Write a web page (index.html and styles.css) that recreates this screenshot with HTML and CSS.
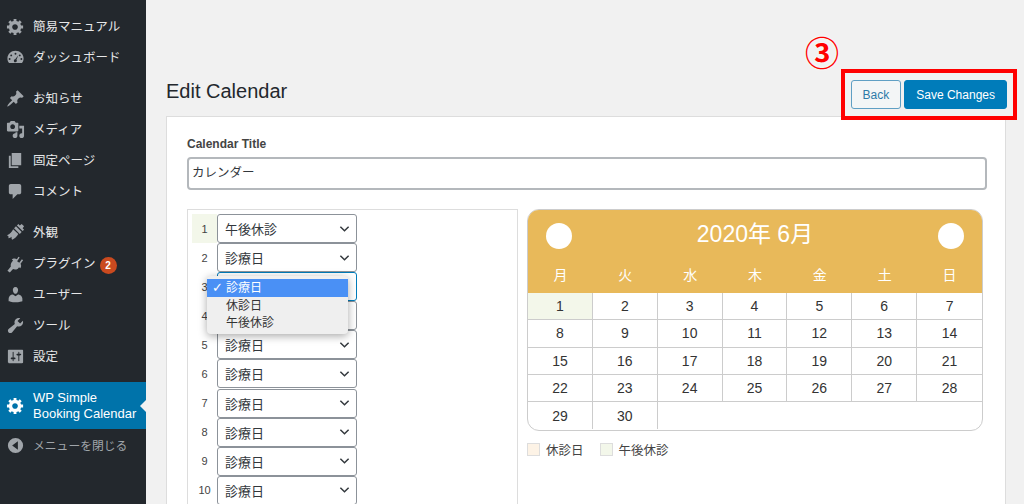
FILE: index.html
```html
<!DOCTYPE html>
<html lang="ja">
<head>
<meta charset="utf-8">
<title>Edit Calendar</title>
<link rel="stylesheet" href="styles.css">
</head>
<body>
<div class="app">
  <nav class="side">
    <ul class="menu">
      <li class="item"><svg class="ic" viewBox="0 0 20 20"><path d="M18 12h-2.180c-.17.7-.44 1.350-.81 1.930l1.540 1.540-2.100 2.100-1.540-1.540c-.58.360-1.230.630-1.910.790V19H8v-2.180c-.68-.160-1.330-.430-1.910-.790l-1.540 1.540-2.120-2.120 1.540-1.540c-.360-.580-.630-1.230-.790-1.910H1V9.030h2.170c.160-.7.440-1.350.8-1.940L2.430 5.550l2.100-2.100 1.540 1.540c.58-.370 1.240-.640 1.930-.810V2h3v2.180c.68.160 1.330.430 1.910.790l1.540-1.540 2.120 2.120-1.540 1.540c.360.590.640 1.240.8 1.940H18V12zm-8.500 1.500c1.660 0 3-1.340 3-3s-1.340-3-3-3-3 1.340-3 3 1.340 3 3 3z"/></svg><span>簡易マニュアル</span></li>
      <li class="item"><svg class="ic" viewBox="0 0 20 20"><path fill-rule="evenodd" d="M10 3c-4.600 0-8.500 3.600-8.500 8 0 1.800.6 3.500 1.700 4.900h13.600c1.100-1.400 1.700-3.100 1.700-4.900 0-4.400-3.900-8-8.500-8zM10 5a1 1 0 1 1 0 2 1 1 0 0 1 0-2zM5.500 6.800a1 1 0 1 1 0 2 1 1 0 0 1 0-2zM14.500 6.800a1 1 0 1 1 0 2 1 1 0 0 1 0-2zM3.800 10.500a1 1 0 1 1 0 2 1 1 0 0 1 0-2zM16.200 10.500a1 1 0 1 1 0 2 1 1 0 0 1 0-2zM13 7.500l-2 4.800a1.600 1.600 0 1 1-1.300-.5z"/></svg><span>ダッシュボード</span></li>
      <li class="item sep"><svg class="ic" viewBox="0 0 20 20"><path d="M10.440 3.020l1.820-1.820 6.360 6.350-1.830 1.820c-1.050-.68-2.480-.57-3.410.36l-.75.75c-.92.930-1.040 2.350-.35 3.410l-1.830 1.820-2.410-2.410-2.800 2.790c-.42.420-3.380 2.710-3.800 2.290s1.860-3.390 2.280-3.810l2.790-2.790L4.100 9.360l1.830-1.820c1.050.690 2.480.570 3.400-.36l.75-.75c.930-.920 1.050-2.350.360-3.410z"/></svg><span>お知らせ</span></li>
      <li class="item"><svg class="ic" viewBox="0 0 20 20"><path d="M13 11V4c0-.55-.45-1-1-1h-1.670L9 1H5L3.670 3H2c-.55 0-1 .45-1 1v7c0 .55.45 1 1 1h10c.55 0 1-.45 1-1zM7 4.500c1.380 0 2.500 1.120 2.500 2.500S8.380 9.500 7 9.500 4.500 8.380 4.500 7 5.620 4.500 7 4.500zM14 6h5v10.500c0 1.380-1.120 2.500-2.500 2.500S14 17.880 14 16.500s1.120-2.500 2.500-2.500c.17 0 .34.020.5.050V9h-3V6zm-4 8.050V13h2v3.500c0 1.380-1.120 2.500-2.500 2.500S7 17.880 7 16.500 8.120 14 9.500 14c.17 0 .34.020.5.050z"/></svg><span>メディア</span></li>
      <li class="item"><svg class="ic" viewBox="0 0 20 20"><path d="M6 15V2h10v13H6zm-1 1h8v2H3V5h2v11z"/></svg><span>固定ページ</span></li>
      <li class="item"><svg class="ic" viewBox="0 0 20 20"><path d="M5 2h9c1.100 0 2 .9 2 2v7c0 1.100-.9 2-2 2h-2l-5 5v-5H5c-1.100 0-2-.9-2-2V4c0-1.100.9-2 2-2z"/></svg><span>コメント</span></li>
      <li class="item sep"><svg class="ic" viewBox="0 0 20 20"><path d="M11.500 2.500l6 6 1.500-1.500-1.500-1.500L19 3.500 16.500 1 14.500 2.500 13 1zM10.500 3.500L8.500 5.500l6 6 2-2zM7.500 6.500C6.500 9 4 11.500 1 13c1.500.5 2 1.500 1.500 3 1.500 0 2.500-.5 3.500-1.500-.3 1-.3 2 .5 3 2.500-1 5-3.500 6.500-6z"/></svg><span>外観</span></li>
      <li class="item"><svg class="ic" viewBox="0 0 20 20"><path d="M13.100 2.800l1.300 1-2.700 3.700 2.300 1.700 2.700-3.700 1.300 1-2.700 3.700c1 1.700.8 3.300-.3 4.700l-1.300-.9-1.200 1.500c-1.800 1.100-3.600 1.200-5.100.4L4 19.500l-2.500-1.900 3.600-4.500c-.4-1.600 0-3.300 1.100-4.700l1.200-1.500-1.300-1 1.100-.8c1.400-.6 3-.5 4.300.4z"/></svg><span class="gapped">プラグイン</span><b class="badge">2</b></li>
      <li class="item"><svg class="ic" viewBox="0 0 20 20"><path d="M10 9.250c-2.270 0-2.730-3.440-2.730-3.440C7 4.020 7.820 2 9.970 2c2.160 0 2.980 2.020 2.710 3.810 0 0-.41 3.440-2.680 3.440zm0 2.570L12.720 10c2.390 0 4.520 2.330 4.520 4.530v2.490s-3.650 1.130-7.240 1.130c-3.650 0-7.240-1.130-7.240-1.130v-2.490c0-2.250 1.940-4.480 4.470-4.480z"/></svg><span>ユーザー</span></li>
      <li class="item"><svg class="ic" viewBox="0 0 20 20"><path d="M16.680 9.770c-1.340 1.340-3.300 1.670-4.950.99l-5.410 6.520c-.99.990-2.590.990-3.570 0-.99-.99-.99-2.590 0-3.570l6.520-5.420c-.68-1.650-.35-3.610.99-4.950 1.280-1.280 3.120-1.620 4.720-1.060l-2.890 2.890 2.820 2.820 2.860-2.870c.53 1.580.18 3.400-1.090 4.650z"/></svg><span>ツール</span></li>
      <li class="item"><svg class="ic" viewBox="0 0 20 20"><path d="M18 16V4c0-.55-.45-1-1-1H3c-.55 0-1 .45-1 1v12c0 .55.45 1 1 1h14c.55 0 1-.45 1-1zM8 11h1c.55 0 1 .45 1 1s-.45 1-1 1H8v1.500c0 .28-.22.5-.5.5s-.5-.22-.5-.5V13H6c-.55 0-1-.45-1-1s.45-1 1-1h1V5.500c0-.28.22-.5.5-.5s.5.22.5.5V11zm5-2h-1c-.55 0-1-.45-1-1s.45-1 1-1h1V5.500c0-.28.22-.5.5-.5s.5.22.5.5V7h1c.55 0 1 .45 1 1s-.45 1-1 1h-1v5.500c0 .28-.22.5-.5.5s-.5-.22-.5-.5V9z"/></svg><span>設定</span></li>
      <li class="item active"><svg class="ic" viewBox="0 0 20 20"><path d="M18 12h-2.180c-.17.7-.44 1.350-.81 1.930l1.540 1.540-2.100 2.100-1.540-1.540c-.58.360-1.230.630-1.910.790V19H8v-2.180c-.68-.160-1.330-.430-1.910-.790l-1.540 1.540-2.120-2.120 1.540-1.540c-.360-.580-.630-1.230-.790-1.910H1V9.030h2.170c.160-.7.440-1.350.8-1.940L2.430 5.550l2.100-2.100 1.540 1.540c.58-.370 1.240-.640 1.930-.810V2h3v2.180c.68.160 1.330.430 1.910.790l1.540-1.540 2.120 2.120-1.540 1.540c.360.590.640 1.240.8 1.940H18V12zm-8.500 1.500c1.660 0 3-1.340 3-3s-1.340-3-3-3-3 1.340-3 3 1.340 3 3 3z"/></svg><span>WP Simple<br>Booking Calendar</span></li>
      <li class="item close"><svg class="ic" viewBox="0 0 20 20"><path fill-rule="evenodd" d="M10 2a8 8 0 1 1 0 16 8 8 0 0 1 0-16zM12.500 5.500L6.500 10l6 4.500z"/></svg><span>メニューを閉じる</span></li>
    </ul>
  </nav>
  <main class="main">
    <header class="head">
      <h1 class="title">Edit Calendar</h1>
      <div class="actions">
        <button class="btn">Back</button>
        <button class="btn primary">Save Changes</button>
      </div>
      <div class="mark">
        <span class="num">③</span>
      </div>
    </header>
    <section class="card">
      <div class="label">Calendar Title</div>
      <div class="input">カレンダー</div>
      <div class="cols">
        <div class="days">
          <div class="day"><span class="n hl">1</span><div class="sel"><span>午後休診</span><svg class="chev" viewBox="0 0 12 8"><path d="M1.500 1.500L6 6l4.500-4.500"/></svg></div></div>
          <div class="day"><span class="n">2</span><div class="sel"><span>診療日</span><svg class="chev" viewBox="0 0 12 8"><path d="M1.500 1.500L6 6l4.500-4.500"/></svg></div></div>
          <div class="day"><span class="n">3</span><div class="sel focus"></div>
            <ul class="drop">
              <li class="opt on">診療日</li>
              <li class="opt">休診日</li>
              <li class="opt">午後休診</li>
            </ul>
          </div>
          <div class="day"><span class="n">4</span><div class="sel"></div></div>
          <div class="day"><span class="n">5</span><div class="sel"><span>診療日</span><svg class="chev" viewBox="0 0 12 8"><path d="M1.500 1.500L6 6l4.500-4.500"/></svg></div></div>
          <div class="day"><span class="n">6</span><div class="sel"><span>診療日</span><svg class="chev" viewBox="0 0 12 8"><path d="M1.500 1.500L6 6l4.500-4.500"/></svg></div></div>
          <div class="day"><span class="n">7</span><div class="sel"><span>診療日</span><svg class="chev" viewBox="0 0 12 8"><path d="M1.500 1.500L6 6l4.500-4.500"/></svg></div></div>
          <div class="day"><span class="n">8</span><div class="sel"><span>診療日</span><svg class="chev" viewBox="0 0 12 8"><path d="M1.500 1.500L6 6l4.500-4.500"/></svg></div></div>
          <div class="day"><span class="n">9</span><div class="sel"><span>診療日</span><svg class="chev" viewBox="0 0 12 8"><path d="M1.500 1.500L6 6l4.500-4.500"/></svg></div></div>
          <div class="day"><span class="n">10</span><div class="sel"><span>診療日</span><svg class="chev" viewBox="0 0 12 8"><path d="M1.500 1.500L6 6l4.500-4.500"/></svg></div></div>
        </div>
        <div class="calwrap">
          <div class="cal">
            <div class="calhead">
              <i class="dot"></i><span class="month">2020年 6月</span><i class="dot"></i>
            </div>
            <div class="week"><span>月</span><span>火</span><span>水</span><span>木</span><span>金</span><span>土</span><span>日</span></div>
            <div class="grid">
              <span class="hl">1</span><span>2</span><span>3</span><span>4</span><span>5</span><span>6</span><span>7</span>
              <span>8</span><span>9</span><span>10</span><span>11</span><span>12</span><span>13</span><span>14</span>
              <span>15</span><span>16</span><span>17</span><span>18</span><span>19</span><span>20</span><span>21</span>
              <span>22</span><span>23</span><span>24</span><span>25</span><span>26</span><span>27</span><span>28</span>
              <span>29</span><span>30</span>
            </div>
          </div>
          <div class="legend">
            <i class="sw off"></i><span class="lt">休診日</span>
            <i class="sw half"></i><span class="lt">午後休診</span>
          </div>
        </div>
      </div>
    </section>
  </main>
</div>
</body>
</html>
```
FILE: styles.css
```css
* { box-sizing: border-box; }
html, body { margin: 0; height: 504px; overflow: hidden; }
body { font-family: "Liberation Sans", "Noto Sans CJK JP", sans-serif; color: #3c434a; background: #f1f1f1; }
ul { list-style: none; margin: 0; padding: 0; }
.app { display: flex; height: 504px; overflow: hidden; }

.side { width: 146px; flex: none; background: #23282d; padding-top: 11px; }
.item { display: flex; align-items: center; height: 31px; padding-left: 6px; font-size: 12.5px; color: #e6e7e8; }
.item span { margin-left: 8px; line-height: 16px; white-space: nowrap; }
.item.sep { margin-top: 10px; }
.ic { width: 19px; height: 19px; flex: none; fill: #a0a5aa; }
.item .gapped { margin-right: 4px; }
.badge { width: 17px; height: 17px; margin-top: 3px; border-radius: 50%; background: #ca4a1f; color: #fff; font-size: 10px; line-height: 17px; text-align: center; }
.active { position: relative; height: 47px; margin-top: 10px; background: #0073aa; color: #fff; font-size: 13px; }
.active .ic { fill: #fff; }
.active::after { content: ""; position: absolute; right: 0; top: 18px; border: 6px solid transparent; border-left-width: 0; border-right-color: #f1f1f1; }
.close { height: 33px; color: #a0a5aa; font-size: 11.8px; }

.main { flex: 1; min-width: 0; padding: 0 18px 0 20px; }
.head { position: relative; display: flex; justify-content: space-between; align-items: flex-start; height: 116px; padding-top: 80px; }
.title { margin: 0; font-size: 20px; font-weight: 400; line-height: 23px; color: #23282d; }
.actions { display: flex; gap: 3px; margin-right: -1px; }
.btn { height: 29px; padding: 0 11px; border: 1px solid #5f9fc4; border-radius: 3px; background: #f3f5f6; color: #2d7aa8; font: 12px "Liberation Sans", sans-serif; }
.primary { background: #007cba; border-color: #007cba; color: #fff; }
.mark { position: absolute; left: 675px; top: 69px; width: 176px; height: 51px; border: 4px solid #f00; }
.num { position: absolute; left: -40px; top: -40px; font: 700 34px/38px "Noto Sans CJK JP", sans-serif; color: #f00; text-shadow: 0 0 3px #fff; }

.card { height: 400px; background: #fff; border: 1px solid #ddd; padding: 20px; }
.label { font-size: 12px; font-weight: 700; line-height: 15px; color: #444; }
.input { width: 800px; height: 33px; margin-top: 5px; padding-left: 3px; border: 2px solid #b4b8bc; border-radius: 4px; font-size: 12.5px; line-height: 29px; color: #32373c; }
.cols { display: flex; gap: 9px; margin-top: 19px; }

.days { width: 331px; height: 300px; border: 1px solid #ddd; padding: 4px 0 0 4px; }
.day { position: relative; display: flex; height: 29.1px; font-size: 11px; }
.n { width: 25px; display: flex; align-items: center; justify-content: center; color: #444; }
.n.hl { background: #f3f7ea; }
.sel { display: flex; align-items: center; justify-content: space-between; width: 140px; height: 29px; padding: 0 6px 0 7px; border: 1px solid #8c9299; border-radius: 3px; background: #fff; font-size: 13px; color: #32373c; }
.focus { border-color: #007cba; }
.chev { width: 11px; height: 8px; fill: none; stroke: #32373c; stroke-width: 1.6; }
.drop { position: absolute; left: 15px; top: 4px; z-index: 2; width: 141px; height: 58px; border-radius: 4px; background: #efefef; box-shadow: 0 2px 8px rgba(0,0,0,.35); font-size: 12px; color: #333; }
.opt { height: 17.5px; padding-left: 19px; line-height: 18.5px; }
.opt.on { position: relative; background: #4a90f5; color: #fff; margin-top: 3px; }
.opt.on::before { content: "✓"; position: absolute; left: 5px; font: 700 13px/17px "DejaVu Sans", sans-serif; }

.calwrap { width: 456px; }
.cal { height: 222px; border: 1px solid #ccc; border-radius: 12px; overflow: hidden; }
.calhead { display: flex; align-items: center; justify-content: space-between; height: 52px; padding: 0 18px; background: #e8b95a; }
.dot { width: 26px; height: 26px; border-radius: 50%; background: #fff; }
.month { margin-bottom: 8px; font-size: 23px; color: #fff; }
.week { display: grid; grid-template-columns: repeat(7, 1fr); height: 31px; background: #e8b95a; color: #fff; font-size: 14px; text-align: center; line-height: 26px; }
.grid { display: grid; grid-template-columns: repeat(7, 1fr); grid-auto-rows: 27.3px; font-size: 14px; color: #333; }
.grid span { display: flex; align-items: center; justify-content: center; border-right: 1px solid #ccc; border-bottom: 1px solid #ccc; }
.grid span:nth-child(7n) { border-right: 0; }
.grid span:nth-child(n+29) { border-bottom: 0; }
.grid .hl { background: #f3f7ea; }
.legend { display: flex; align-items: center; margin-top: 9px; font-size: 12.5px; color: #444; }
.sw { width: 13px; height: 13px; border: 1px solid #ddd; }
.off { background: #fdf3e6; }
.half { background: #f3f7ea; }
.lt { margin: 0 16px 0 6px; }
```
